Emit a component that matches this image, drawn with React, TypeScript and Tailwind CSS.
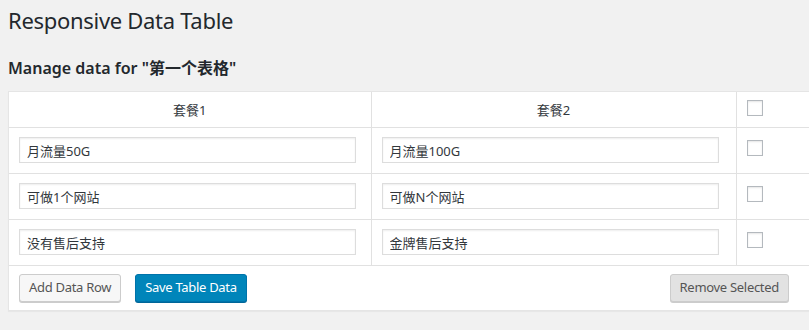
import React from 'react';

const rows = [
  ['月流量50G', '月流量100G'],
  ['可做1个网站', '可做N个网站'],
  ['没有售后支持', '金牌售后支持'],
];

const font = { fontFamily: '"Noto Sans", "Noto Sans CJK SC", sans-serif' };

const Checkbox: React.FC = () => (
  <span className="inline-block w-4 h-4 border border-[#b4b9be] bg-white shadow-[inset_0_1px_2px_rgba(0,0,0,0.1)]" />
);

export default function App() {
  return (
    <div
      className="w-[809px] h-[330px] overflow-hidden bg-[#f1f1f1] text-[#23282d] pl-2 font-['Noto_Sans','Noto_Sans_CJK_SC',sans-serif]"
    >
      <h1 className="pt-[6px] text-[22px] leading-[29px] font-normal tracking-[-0.3px]">Responsive Data Table</h1>
      <h2 className="mt-[23px] text-[16px] leading-[20px] font-semibold">
        Manage data for "<span className="font-bold">第一个表格</span>"
      </h2>
      <div className="mt-[13px] w-[820px] bg-white border border-[#e5e5e5] shadow-[0_1px_1px_rgba(0,0,0,0.04)]">
        <table className="border-collapse table-fixed w-full text-[13px] text-[#32373c]">
          <colgroup>
            <col className="w-[362px]" />
            <col className="w-[365px]" />
            <col />
          </colgroup>
          <thead>
            <tr className="h-[35px] border-b border-[#e1e1e1]">
              <th className="font-normal text-center border-r border-[#e1e1e1] pt-[3px]">套餐1</th>
              <th className="font-normal text-center border-r border-[#e1e1e1] pt-[3px]">套餐2</th>
              <th className="text-left pl-[10px] align-top pt-[8px]"><Checkbox /></th>
            </tr>
          </thead>
          <tbody>
            {rows.map((r, i) => (
              <tr key={i} className="h-[46px] border-b border-[#e1e1e1]">
                {r.map((v, j) => (
                  <td key={j} className="pl-[10px] border-r border-[#e1e1e1]">
                    <input
                      defaultValue={v}
                      style={font}
                      className="block w-[337px] h-[26px] px-[7px] border border-[#ddd] shadow-[inset_0_1px_2px_rgba(0,0,0,0.07)] text-[13px] text-[#32373c] bg-white outline-none"
                    />
                  </td>
                ))}
                <td className="pl-[10px] align-top pt-[12px]"><Checkbox /></td>
              </tr>
            ))}
          </tbody>
        </table>
        <div className="flex items-center h-[44px] pl-[10px] pr-[38px] pt-[1px] text-[13px] tracking-[-0.3px]">
          <button className="h-[28px] px-[9px] text-[#555] bg-[#f7f7f7] border border-[#ccc] rounded-[3px] shadow-[0_1px_0_#ccc]">
            Add Data Row
          </button>
          <button className="ml-[14px] h-[28px] px-[9px] text-white bg-[#0085ba] border border-[#0073aa] rounded-[3px] shadow-[0_1px_0_#006799]">
            Save Table Data
          </button>
          <button className="ml-auto h-[28px] px-[9px] text-[#555] bg-[#e2e2e2] border border-[#ccc] rounded-[3px] shadow-[0_1px_0_#ccc]">
            Remove Selected
          </button>
        </div>
      </div>
    </div>
  );
}
